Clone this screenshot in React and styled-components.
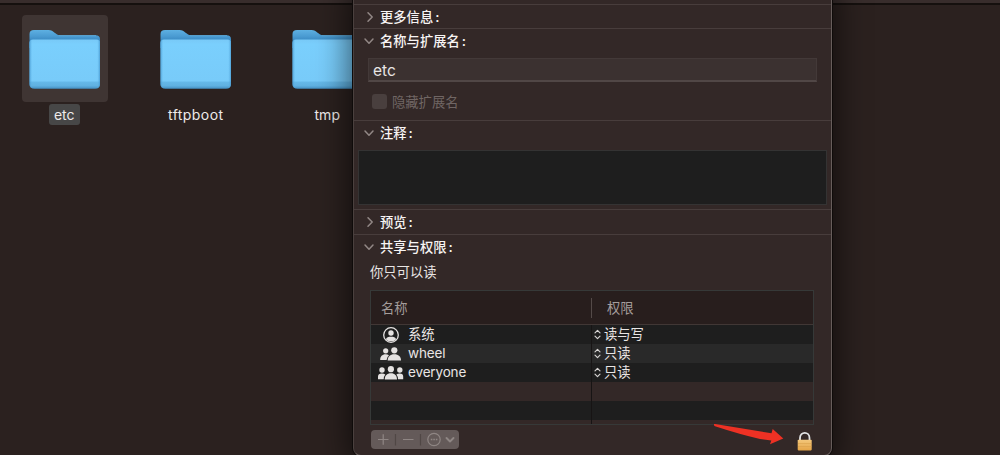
import React from "react";
import styled, { createGlobalStyle } from "styled-components";

const Global = createGlobalStyle`
  * { box-sizing: border-box; }
  body {
    margin: 0;
    background: #2b211f;
    color: #e9e5e4;
    font-family: Inter, "Noto Sans CJK SC", sans-serif;
    font-size: 13.3px;
    overflow: hidden;
  }
`;

const Desktop = styled.main`
  position: relative;
  width: 1000px;
  height: 455px;
  overflow: hidden;
  background: #2b211f;
`;

const Toolbar = styled.div`
  height: 5px;
  background: #382d2c;
  border-bottom: 2px solid #15100e;
`;

const Files = styled.div`
  display: flex;
`;

const FileItem = styled.div`
  width: 131.5px;
  flex: none;
  display: flex;
  flex-direction: column;
  align-items: center;
  &:first-child { margin-left: -1px; }
`;

const Thumb = styled.div`
  width: 86px;
  height: 87px;
  border-radius: 4px;
  padding: 13px 6px 0 7px;
  margin-top: 10px;
  background: ${(p) => (p.$selected ? "#3f3533" : "transparent")};
`;

const FileName = styled.span`
  height: 21px;
  line-height: 21px;
  margin: 2px 1px 0 0;
  padding: 0 5px;
  border-radius: 3px;
  font-size: 14px;
  letter-spacing: ${(p) => p.$spacing || 0}px;
  color: #eeebea;
  background: ${(p) => (p.$selected ? "#474747" : "transparent")};
`;

const InfoWindow = styled.section`
  position: absolute;
  left: 353px;
  top: -20px;
  width: 479px;
  height: 476px;
  padding-top: 23px;
  background: #332827;
  border: 1px solid #675d5b;
  border-left-color: #4a403e;
  border-radius: 8px;
  box-shadow: 0 0 0 1px #0f0b0a, 0 6px 32px 4px rgba(0, 0, 0, 0.6);
`;

const Section = styled.div`
  height: ${(p) => p.$height}px;
  border-top: 1px solid #483d3c;
`;

const Heading = styled.div`
  display: flex;
  align-items: center;
  height: 24px;
  padding-left: 9px;
  font-weight: 500;
  color: #f7f4f3;
  svg { width: 13px; margin-right: 4px; }
`;

const HeadingText = styled.span`
  position: relative;
  top: -1px;
  &::after { content: ":"; font-weight: 600; margin-left: 2px; }
`;

const NameField = styled.div`
  width: 449px;
  height: 24px;
  margin: 5px 0 0 14px;
  padding-left: 4px;
  line-height: 23px;
  font-size: 15.5px;
  background: #3b3130;
  border: 1px solid #433938;
  border-bottom: 2px solid #514746;
`;

const CheckRow = styled.div`
  display: flex;
  align-items: center;
  height: 20px;
  margin: 9px 0 0 18px;
  gap: 5px;
  color: #706664;
`;

const CheckBox = styled.span`
  width: 15px;
  height: 15px;
  border-radius: 3px;
  background: #493f3e;
`;

const Comment = styled.div`
  width: 469px;
  height: 55px;
  margin: 5px 0 0 4px;
  background: #1e1e1e;
  border: 1px solid #343333;
`;

const Access = styled.div`
  height: 20px;
  line-height: 20px;
  margin: 3px 0 8px 16px;
`;

const Table = styled.div`
  width: 444px;
  height: 135px;
  margin-left: 16px;
  border: 1px solid #363938;
  overflow: hidden;
`;

const HeadRow = styled.div`
  display: flex;
  height: 34px;
  align-items: center;
  background: #281e1d;
  border-bottom: 1px solid #413735;
  color: #a49d9b;
`;

const HeadCell = styled.div`
  width: ${(p) => (p.$wide ? "221px" : "220px")};
  height: 20px;
  line-height: 21px;
  padding-left: ${(p) => (p.$wide ? 10 : 15)}px;
  border-right: ${(p) => (p.$wide ? "1px solid #544a48" : "0")};
`;

const Row = styled.div`
  display: flex;
  height: 19px;
  line-height: 19px;
  background: ${(p) => p.$bg};
`;

const Who = styled.div`
  display: flex;
  align-items: center;
  width: 221px;
  padding-left: 6px;
  border-right: 1px solid #171414;
  font-size: ${(p) => (p.$latin ? 13.5 : 13.3)}px;
  letter-spacing: ${(p) => (p.$latin ? -0.15 : 0)}px;
  svg { margin-right: 4px; flex: none; }
`;

const Right = styled.div`
  display: flex;
  align-items: center;
  padding-left: 2px;
  svg { margin-right: 3px; }
`;

const Footer = styled.div`
  display: flex;
  justify-content: space-between;
  align-items: flex-start;
  padding: 5px 18px 0 17px;
`;

const Actions = styled.div`
  display: flex;
  align-items: center;
  width: 88px;
  height: 19px;
  border-radius: 4px;
  background: #645a59;
`;

const LockWrap = styled.div`
  width: 16px;
  height: 20px;
  margin-top: 1px;
`;

const Pointer = styled.svg`
  position: absolute;
  left: 710px;
  top: 420px;
`;

const Folder = ({ id }) => (
  <svg width="73" height="62" viewBox="0 0 73 62">
    <defs>
      <linearGradient id={"back" + id} x1="0" y1="0" x2="0" y2="1">
        <stop offset="0" stopColor="#5eb0e2" />
        <stop offset="0.35" stopColor="#4a9bd2" />
        <stop offset="0.6" stopColor="#3987c0" />
        <stop offset="1" stopColor="#3e8ec5" />
      </linearGradient>
      <linearGradient id={"front" + id} x1="0" y1="0" x2="0" y2="1">
        <stop offset="0" stopColor="#78c9f7" />
        <stop offset="0.1" stopColor="#7acffd" />
        <stop offset="0.84" stopColor="#78cbf9" />
        <stop offset="0.87" stopColor="#65b8e8" />
        <stop offset="0.94" stopColor="#60b1e1" />
        <stop offset="1" stopColor="#438fc2" />
      </linearGradient>
      <linearGradient id={"side" + id}>
        <stop offset="0" stopColor="#3f91c9" stopOpacity="0.75" />
        <stop offset="0.04" stopColor="#62b5e8" stopOpacity="0" />
        <stop offset="0.96" stopColor="#62b5e8" stopOpacity="0" />
        <stop offset="1" stopColor="#3f91c9" stopOpacity="0.75" />
      </linearGradient>
    </defs>
    <path d="M.5 6Q.5 2 5 2H19.5C25 2 26.500 7.300 31 7.300H66.500Q71 7.300 71 11.500V20H.5Z" fill={"url(#back" + id + ")"} />
    <path d="M30 7.700H67" stroke="#65b6e5" strokeWidth="0.7" />
    <path d="M.5 15Q.5 11.500 4 11.500H67.500Q71 11.500 71 15V56Q71 60.700 66 60.700H5.500Q.5 60.700 .5 56Z" fill={"url(#front" + id + ")"} />
    <path d="M.5 15Q.5 11.500 4 11.500H67.500Q71 11.500 71 15V56Q71 60.700 66 60.700H5.500Q.5 60.700 .5 56Z" fill={"url(#side" + id + ")"} />
  </svg>
);

const Chevron = ({ open }) => (
  <svg height="13" viewBox="0 0 13 13" fill="none" stroke="#928886" strokeWidth="1.5" strokeLinecap="round" strokeLinejoin="round">
    <path d={open ? "M2 4 6 8.200 10 4" : "M5 1.700 9.200 6 5 10.300"} />
  </svg>
);

const UserIcon = () => (
  <svg width="27" height="18" viewBox="0 0 27 18" fill="#e5e2e1">
    <circle cx="14" cy="9" r="7.300" fill="none" stroke="#e5e2e1" strokeWidth="1.3" />
    <circle cx="14" cy="7" r="2.700" />
    <path d="M8.900 13.200C9.500 11.300 11.400 10.700 14 10.700S18.500 11.300 19.100 13.200C17.600 14.800 15.900 15.300 14 15.300S10.400 14.800 8.900 13.200Z" />
  </svg>
);

const PairIcon = () => (
  <svg width="27" height="18" viewBox="0 0 27 18" fill="#e5e2e1">
    <circle cx="8.700" cy="5.800" r="2.600" />
    <path d="M3.200 14.900C3.200 11.600 5 9.300 8.700 9.300Q10.600 9.300 12 10.200Q9.600 12.200 9.600 14.900Z" />
    <circle cx="17.300" cy="5.300" r="3.100" />
    <path d="M10.700 15.500C10.700 11.700 13.100 9.300 17.300 9.300S24 11.700 24 15.500Z" />
  </svg>
);

const GroupIcon = () => (
  <svg width="27" height="18" viewBox="0 0 27 18" fill="#e5e2e1">
    <circle cx="5" cy="6" r="2.700" />
    <circle cx="22.800" cy="6" r="2.700" />
    <path d="M1 15.200V12.500Q1 9.500 4.800 9.500Q7 9.500 8.300 10.400Q6.600 12.500 6.700 15.200ZM26.200 15.200V12.500Q26.200 9.500 22.800 9.500Q20.700 9.500 19.400 10.400Q21.100 12.500 21 15.200Z" />
    <circle cx="13.900" cy="5.200" r="3.100" />
    <path d="M7.700 15.600C7.700 11.600 9.900 9.300 13.900 9.300S20 11.600 20 15.600Z" />
  </svg>
);

const Updown = () => (
  <svg width="7" height="11" viewBox="0 0 7 11" fill="none" stroke="#d5d2d1" strokeWidth="1.2" strokeLinecap="round" strokeLinejoin="round">
    <path d="M1 3.800 3.500 1.300 6 3.800M1 7.200 3.500 9.700 6 7.200" />
  </svg>
);

const files = [
  { name: "etc", selected: true },
  { name: "tftpboot", spacing: 0.42 },
  { name: "tmp" },
];

const entries = [
  { name: "系统", right: "读与写", bg: "#1e1e1e", Icon: UserIcon },
  { name: "wheel", right: "只读", bg: "#292929", Icon: PairIcon, latin: true },
  { name: "everyone", right: "只读", bg: "#1e1e1e", Icon: GroupIcon, latin: true },
  { bg: "#332827" },
  { bg: "#1e1e1e" },
  { bg: "#332827" },
];

const SectionHeading = ({ open, children }) => (
  <Heading><Chevron open={open} /><HeadingText>{children}</HeadingText></Heading>
);

export default function App() {
  return (
    <Desktop>
      <Global />
      <Toolbar />
      <Files>
        {files.map(({ name, selected, spacing }, i) => (
          <FileItem key={name}>
            <Thumb $selected={selected}><Folder id={i} /></Thumb>
            <FileName $selected={selected} $spacing={spacing}>{name}</FileName>
          </FileItem>
        ))}
      </Files>
      <InfoWindow>
        <Section $height={24}><SectionHeading>更多信息</SectionHeading></Section>
        <Section $height={92}>
          <SectionHeading open>名称与扩展名</SectionHeading>
          <NameField>etc</NameField>
          <CheckRow><CheckBox />隐藏扩展名</CheckRow>
        </Section>
        <Section $height={89}>
          <SectionHeading open>注释</SectionHeading>
          <Comment />
        </Section>
        <Section $height={25}><SectionHeading>预览</SectionHeading></Section>
        <Section $height={220}>
          <SectionHeading open>共享与权限</SectionHeading>
          <Access>你只可以读</Access>
          <Table>
            <HeadRow><HeadCell $wide>名称</HeadCell><HeadCell>权限</HeadCell></HeadRow>
            {entries.map(({ name, right, bg, Icon, latin }, i) => (
              <Row key={i} $bg={bg}>
                <Who $latin={latin}>{Icon && <Icon />}{name}</Who>
                {right && <Right><Updown />{right}</Right>}
              </Row>
            ))}
          </Table>
          <Footer>
            <Actions>
              <svg width="88" height="19" viewBox="0 0 88 19" fill="none" stroke="#8f8684" strokeWidth="1.2">
                <path d="M7 9.500H17.500M12.200 4.200V14.800M32 9.500H42.500" />
                <path d="M24.500 4V15.500M49.500 4V15.500" stroke="#504745" />
                <circle cx="63" cy="9.500" r="6.200" />
                <path d="M59.800 9.500H66.400" strokeWidth="1.600" strokeDasharray="1.600 .9" />
                <path d="M75.500 8 79 11.500 82.500 8" strokeWidth="1.900" strokeLinecap="round" strokeLinejoin="round" />
              </svg>
            </Actions>
            <LockWrap>
              <svg width="16" height="20" viewBox="0 0 16 20">
                <defs>
                  <linearGradient id="brass" x1="0" y1="0" x2="0" y2="1">
                    <stop offset="0" stopColor="#f3c77b" />
                    <stop offset="1" stopColor="#e5a548" />
                  </linearGradient>
                </defs>
                <path d="M3 10V7C3 .2 12.500 .2 12.500 7V10" fill="none" stroke="#e1e2e4" strokeWidth="1.800" />
                <rect x=".7" y="8.700" width="14" height="10.700" rx=".8" fill="url(#brass)" />
                <path d="M1 12.500H14.500M1 15.500H14.500" stroke="#d79d48" strokeWidth=".5" />
              </svg>
            </LockWrap>
          </Footer>
        </Section>
      </InfoWindow>
      <Pointer width="80" height="30" viewBox="0 0 80 30" fill="#ee3124">
        <path d="M4 4Q4 3.800 5 4L61.500 13.300 62.700 9 73.300 18.600 60 24.200 61.300 20.500 50 19Q30 14.500 5 6.300Q3.800 5.800 4 4Z" />
      </Pointer>
    </Desktop>
  );
}
